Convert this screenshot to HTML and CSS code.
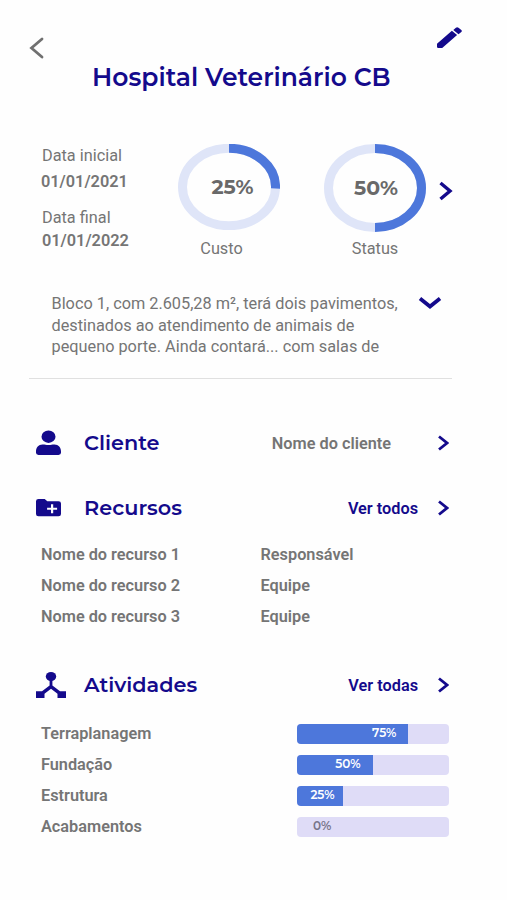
FILE: index.html
```
<!DOCTYPE html>
<html lang="pt-BR">

<head>
  <meta charset="UTF-8">
  <meta name="viewport" content="width=device-width, initial-scale=1.0">
  <title>Hospital Veterinário CB</title>
  <link rel="stylesheet" href="styles.css">
</head>

<body>
  <div class="page">
    <header class="header">
      <svg class="back" viewBox="0 0 14 22"><path d="M12.5 2 2 11l10.500 9" /></svg>
      <svg class="edit" viewBox="0 0 25 21"><path d="M0 16.800 14.900 3.700l5.200 4.300L5.200 20.900H1.300Q0 20.900 0 19.700zM16.300 2.900 18.900.7q1.300-1 2.600 0l2.800 2.300q1.100 1 0 2.100L21.500 7.200z" /></svg>
    </header>
    <h1 class="title">Hospital Veterinário CB</h1>

    <section class="summary">
      <div class="dates">
        <div class="label">Data inicial<span class="tick"></span></div>
        <div class="date">01/01/2021</div>
        <div class="label end">Data final</div>
        <div class="date last">01/01/2022</div>
      </div>
      <div class="chart">
        <div class="ring">
          <svg viewBox="0 0 102 86">
            <ellipse class="track" cx="51" cy="43" rx="46.500" ry="38.700" />
            <path class="value" d="M51 4.300A46.500 38.700 0 0 1 97.500 44.500" />
          </svg>
          <span class="percent">25%</span>
        </div>
        <div class="caption">Custo</div>
      </div>
      <div class="chart status">
        <div class="ring">
          <svg viewBox="0 0 102 88">
            <ellipse class="track" cx="51" cy="44" rx="46.500" ry="39.500" />
            <path class="value" d="M51 4.500A46.500 39.500 0 0 1 51 83.500" />
          </svg>
          <span class="percent">50%</span>
        </div>
        <div class="caption">Status</div>
      </div>
      <svg class="next" viewBox="0 0 15 20"><path d="M2.500 2 12 10l-9.500 8" /></svg>
    </section>

    <section class="about">
      <p>Bloco 1, com 2.605,28 m², terá dois pavimentos,<br>destinados ao atendimento de animais de<br>pequeno porte. Ainda contará... com salas de</p>
      <svg class="down" viewBox="0 0 24 14"><path d="M2 2.500 12 10.500l10-8" /></svg>
    </section>

    <section class="block client">
      <div class="head">
        <svg class="icon" viewBox="0 0 31 26"><ellipse cx="12.500" cy="6.700" rx="7" ry="6.200" /><path d="M0 21.500c0-4 2.500-7 6.500-7 2.500 0 3.500.5 6 .5s3.500-.5 6-.5c4 0 6.500 3 6.500 7v1.300q0 2.100-2.500 2.100h-20Q0 24.900 0 22.800z" /></svg>
        <h2>Cliente</h2>
        <span class="info">Nome do cliente</span>
        <svg class="arrow" viewBox="0 0 12 16"><path d="M2 1.500l8 6.500-8 6.500" /></svg>
      </div>
    </section>

    <section class="block resources">
      <div class="head">
        <svg class="icon" viewBox="0 0 31 26"><path fill-rule="evenodd" d="M2.500 4h6.200l2.600 2.300H22.500q2.500 0 2.500 2.200V19q0 2.300-2.500 2.300h-20Q0 21.300 0 19V6.200Q0 4 2.500 4zM15 9.300v3.400H11.100v2H15v3.600h2.200v-3.600h3.900v-2h-3.900V9.300z" /></svg>
        <h2>Recursos</h2>
        <a class="more">Ver todos</a>
        <svg class="arrow" viewBox="0 0 12 16"><path d="M2 1.500l8 6.500-8 6.500" /></svg>
      </div>
      <ul class="list">
        <li><span>Nome do recurso 1</span><span>Responsável</span></li>
        <li><span>Nome do recurso 2</span><span>Equipe</span></li>
        <li><span>Nome do recurso 3</span><span>Equipe</span></li>
      </ul>
    </section>

    <section class="block activities">
      <div class="head">
        <svg class="icon" viewBox="0 0 31 26"><ellipse cx="15" cy="4.500" rx="5.200" ry="4.500" /><path d="M13.600 8h2.800v5.500l7.600 5.800h6V26h-8.500v-4.300L15 16.700l-6.500 5V26H0v-6.700h6l7.600-5.800z" /></svg>
        <h2>Atividades</h2>
        <a class="more">Ver todas</a>
        <svg class="arrow" viewBox="0 0 12 16"><path d="M2 1.500l8 6.500-8 6.500" /></svg>
      </div>
      <ul class="progress">
        <li><span>Terraplanagem</span><div class="bar"><div class="fill" style="width: 73.300%">75%</div></div></li>
        <li><span>Fundação</span><div class="bar"><div class="fill" style="width: 49.700%">50%</div></div></li>
        <li><span>Estrutura</span><div class="bar"><div class="fill short" style="width: 30%">25%</div></div></li>
        <li><span>Acabamentos</span><div class="bar"><div class="zero">0%</div></div></li>
      </ul>
    </section>
  </div>
</body>

</html>
```
FILE: styles.css
```
* {
  margin: 0;
  padding: 0;
  box-sizing: border-box;
}
body {
  background: #fefefe;
  color: #757575;
  font-family: Roboto, sans-serif;
  font-size: 16.3px;
}
svg {
  display: block;
  flex: none;
}
ul {
  list-style: none;
}
.page {
  width: 507px;
  height: 900px;
  overflow: hidden;
}
.header {
  display: flex;
  justify-content: space-between;
  height: 60px;
  padding: 27px 45px 0 29px;
}
.back,
.next,
.down,
.arrow {
  fill: none;
  stroke: #140a8c;
  stroke-width: 2.8;
}
.back {
  width: 15px;
  height: 22px;
  margin-top: 10px;
  stroke: #707070;
  stroke-linecap: round;
}
.edit {
  width: 25px;
  height: 21px;
  fill: #140a8c;
}
.title,
h2,
.percent,
.fill,
.zero {
  font-family: Montserrat, Inter, sans-serif;
}
.title {
  height: 36px;
  margin-left: 92px;
  line-height: 35px;
  color: #140a8c;
  font-size: 25px;
  font-weight: 600;
  white-space: nowrap;
}
.summary {
  display: flex;
  height: 136px;
  margin-top: 48px;
}
.dates {
  width: 136px;
  margin-right: 42px;
  padding-left: 42px;
  line-height: 24px;
  flex: none;
  white-space: nowrap;
}
.label {
  display: flex;
}
.tick {
  width: 1px;
  height: 5px;
  margin: 6px 0 0 31px;
  background: #ccc;
}
.date {
  margin: 2px 0 0 -1px;
  font-weight: 600;
}
.end {
  margin-top: 12px;
}
.last {
  margin: -1px 0 0;
}
.chart {
  width: 102px;
  text-align: center;
}
.chart.status {
  margin-left: 44px;
}
.ring {
  display: grid;
  height: 88px;
}
.ring svg,
.percent {
  grid-area: 1 / 1;
}
.ring svg {
  width: 102px;
}
.track,
.value {
  fill: none;
  stroke-width: 9;
}
.track {
  stroke: #dfe5f8;
}
.value {
  stroke: #4d77db;
}
.percent {
  align-self: center;
  padding: 0 0 3px 7px;
  color: #696969;
  font-size: 20.500px;
  font-weight: 700;
}
.status .percent {
  padding: 0 0 1px 2px;
}
.caption {
  margin: 5px 15px 0 0;
  line-height: 24px;
}
.status .caption {
  margin-right: 0;
}
.next {
  width: 15px;
  height: 20px;
  margin: 37px 0 0 12px;
  stroke-width: 3.4;
}
.about {
  display: flex;
  height: 99px;
  margin: 0 55px 0 29px;
  padding: 13px 10px 0 22.500px;
  justify-content: space-between;
  border-bottom: 1px solid #e0e0e0;
  line-height: 21.700px;
}
.about p {
  white-space: nowrap;
}
.down {
  width: 24px;
  height: 14px;
  margin-top: 3px;
  stroke-width: 3.8;
}
.block {
  padding: 0 58px 0 36px;
}
.head {
  display: flex;
  align-items: center;
  height: 30px;
  font-weight: 600;
}
.icon {
  width: 31px;
  height: 26px;
  fill: #140a8c;
}
h2 {
  margin: 0 auto 2px 17px;
  color: #140a8c;
  font-size: 20.800px;
  font-weight: 600;
}
.info {
  margin-right: 46px;
}
.more {
  margin-right: 19px;
  color: #140a8c;
}
.arrow {
  width: 12px;
  height: 16px;
}
.client {
  margin-top: 49px;
}
.resources {
  margin-top: 35px;
}
.activities {
  margin-top: 38px;
}
.list,
.progress {
  padding: 16px 0 0 5px;
  font-weight: 600;
}
.list li {
  display: grid;
  grid-template-columns: 219.500px 1fr;
  height: 31px;
  line-height: 31px;
}
.progress {
  padding-top: 18px;
}
.progress li {
  display: flex;
  justify-content: space-between;
  align-items: center;
  height: 31px;
}
.bar {
  width: 152px;
  height: 20px;
  margin-top: 1px;
  overflow: hidden;
  border-radius: 4px;
  background: #dfdcf7;
  font-size: 12px;
  line-height: 17px;
}
.fill {
  height: 20px;
  padding-right: 12px;
  background: #4d77db;
  color: #fff;
  text-align: right;
}
.short {
  padding-right: 8px;
}
.zero {
  padding-left: 16px;
  color: #77758a;
}
```
